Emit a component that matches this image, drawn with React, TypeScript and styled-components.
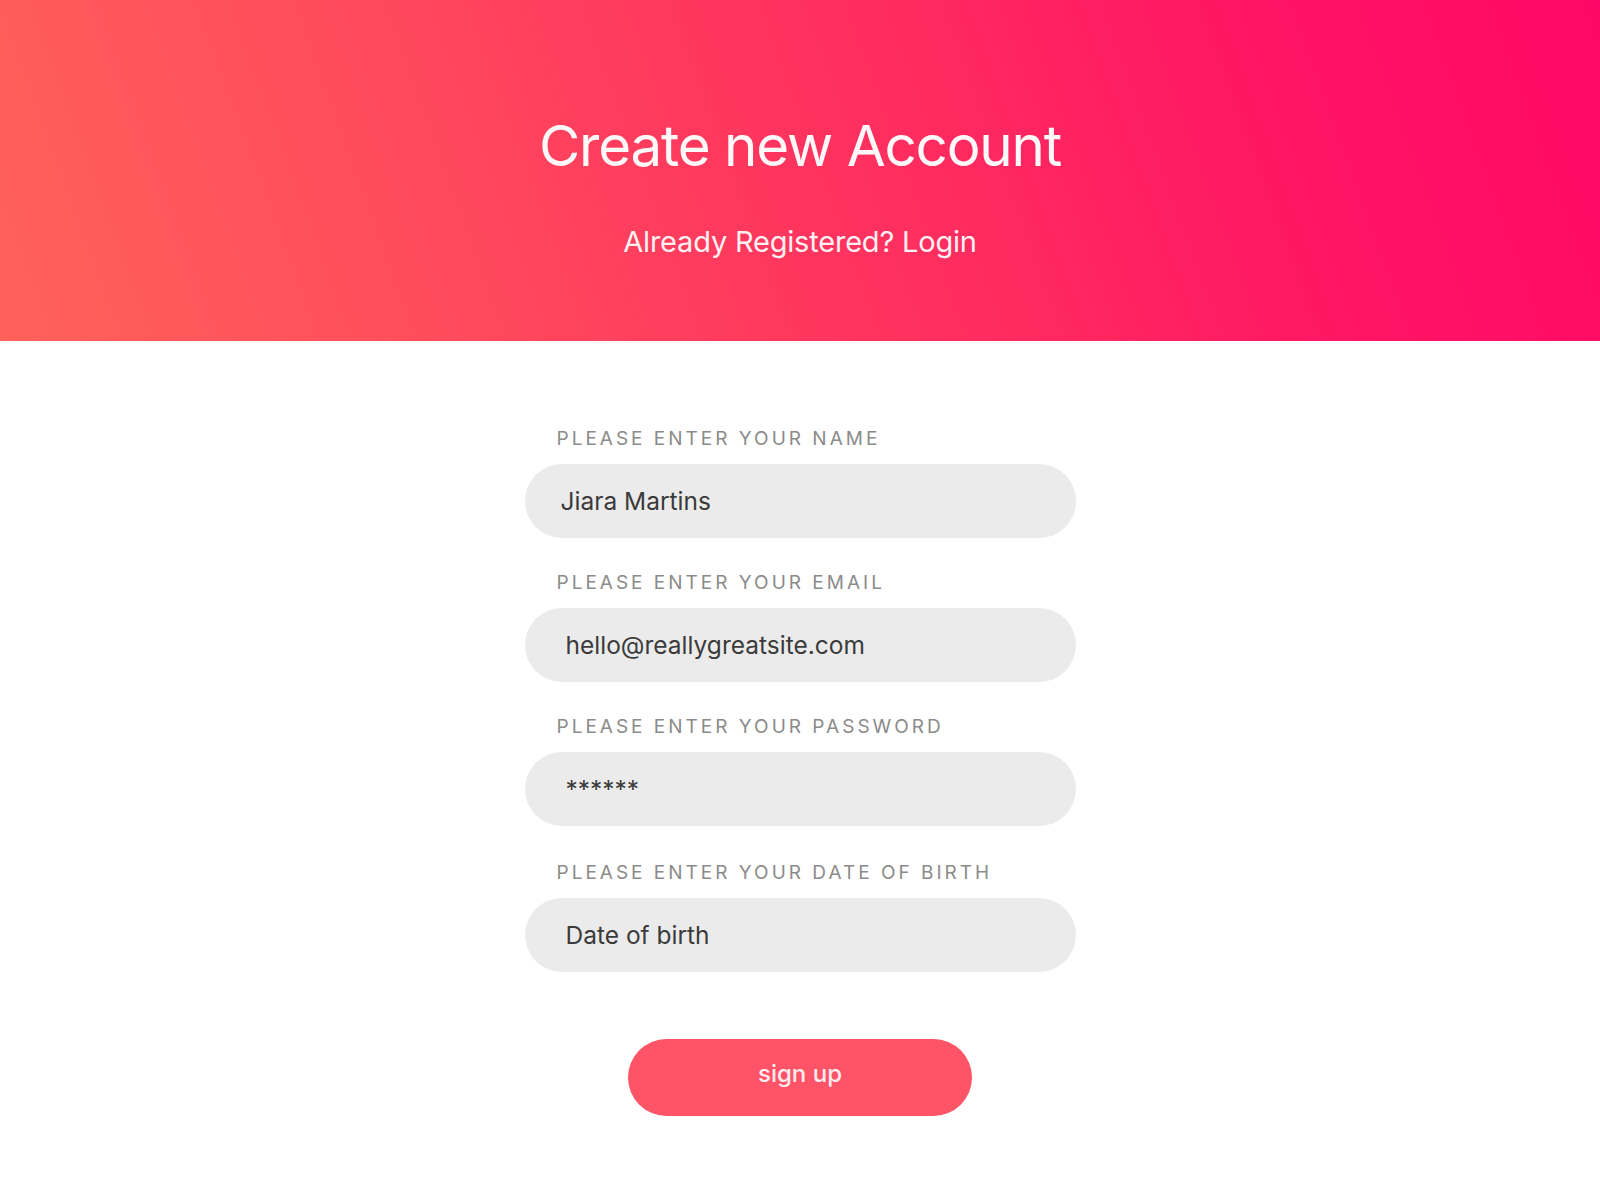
import React from "react";
import styled, { createGlobalStyle } from "styled-components";

const GlobalStyle = createGlobalStyle`
  html, body {
    margin: 0;
    padding: 0;
    background: #ffffff;
  }
  body {
    font-family: Inter, "Noto Sans", "Liberation Sans", sans-serif;
  }
  * { box-sizing: border-box; }
`;

const Page = styled.div`
  width: 100%;
  min-height: 1200px;
  background: #ffffff;
  display: flex;
  flex-direction: column;
`;

const Header = styled.header`
  height: 341px;
  background: linear-gradient(70deg, #ff625a 0%, #ff4c5c 25%, #ff2f5f 55%, #ff1464 80%, #ff0766 100%);
  display: flex;
  flex-direction: column;
  align-items: center;
  color: #ffffff;
`;

const Title = styled.h1`
  margin: 110px 0 0;
  font-size: 56.5px;
  line-height: 72px;
  font-weight: 400;
  letter-spacing: -1.2px;
  color: #fff8f9;
`;

const Subtitle = styled.p`
  margin: 42px 0 0;
  font-size: 29px;
  line-height: 36px;
  font-weight: 400;
  letter-spacing: -0.2px;
  color: #fff0f2;
`;

const Form = styled.form`
  width: 551px;
  margin: 86px auto 0;
  display: flex;
  flex-direction: column;
  gap: 33px;
`;

const Field = styled.div<{ $extra?: number }>`
  display: flex;
  flex-direction: column;
  gap: 13px;
  margin-top: ${(p) => p.$extra ?? 0}px;
`;

const Label = styled.label`
  padding-left: 32px;
  font-size: 19px;
  line-height: 24px;
  letter-spacing: 3px;
  text-transform: uppercase;
  color: #8b8b8b;
  font-weight: 400;
`;

const Input = styled.input<{ $indent?: number }>`
  height: 74px;
  width: 100%;
  border: none;
  outline: none;
  border-radius: 37px;
  background: #ebebeb;
  padding: 0 0 0 ${(p) => p.$indent ?? 40}px;
  font-family: inherit;
  font-size: 24.5px;
  color: #3b3b3b;
  &::placeholder {
    color: #3b3b3b;
    opacity: 1;
  }
`;

const Button = styled.button`
  align-self: center;
  margin-top: 34px;
  width: 344px;
  height: 77px;
  border: none;
  border-radius: 39px;
  background: #ff5467;
  color: #fdecef;
  font-family: inherit;
  font-size: 24px;
  font-weight: 500;
  padding: 0 0 9px;
  cursor: pointer;
`;

const fields = [
  { id: "name", label: "Please enter your name", value: "Jiara Martins", indent: 36, extra: 0 },
  { id: "email", label: "Please enter your email", value: "hello@reallygreatsite.com", indent: 41, extra: 0 },
  { id: "password", label: "Please enter your password", value: "******", indent: 41, extra: 0 },
  { id: "dob", label: "Please enter your date of birth", placeholder: "Date of birth", indent: 41, extra: 2 },
];

export default function App() {
  return (
    <Page>
      <GlobalStyle />
      <Header>
        <Title>Create new Account</Title>
        <Subtitle>Already Registered? Login</Subtitle>
      </Header>
      <Form onSubmit={(e) => e.preventDefault()}>
        {fields.map((f) => (
          <Field key={f.id} $extra={f.extra}>
            <Label htmlFor={f.id}>{f.label}</Label>
            <Input
              id={f.id}
              $indent={f.indent}
              defaultValue={f.value}
              placeholder={f.placeholder}
            />
          </Field>
        ))}
        <Button type="submit">sign up</Button>
      </Form>
    </Page>
  );
}
